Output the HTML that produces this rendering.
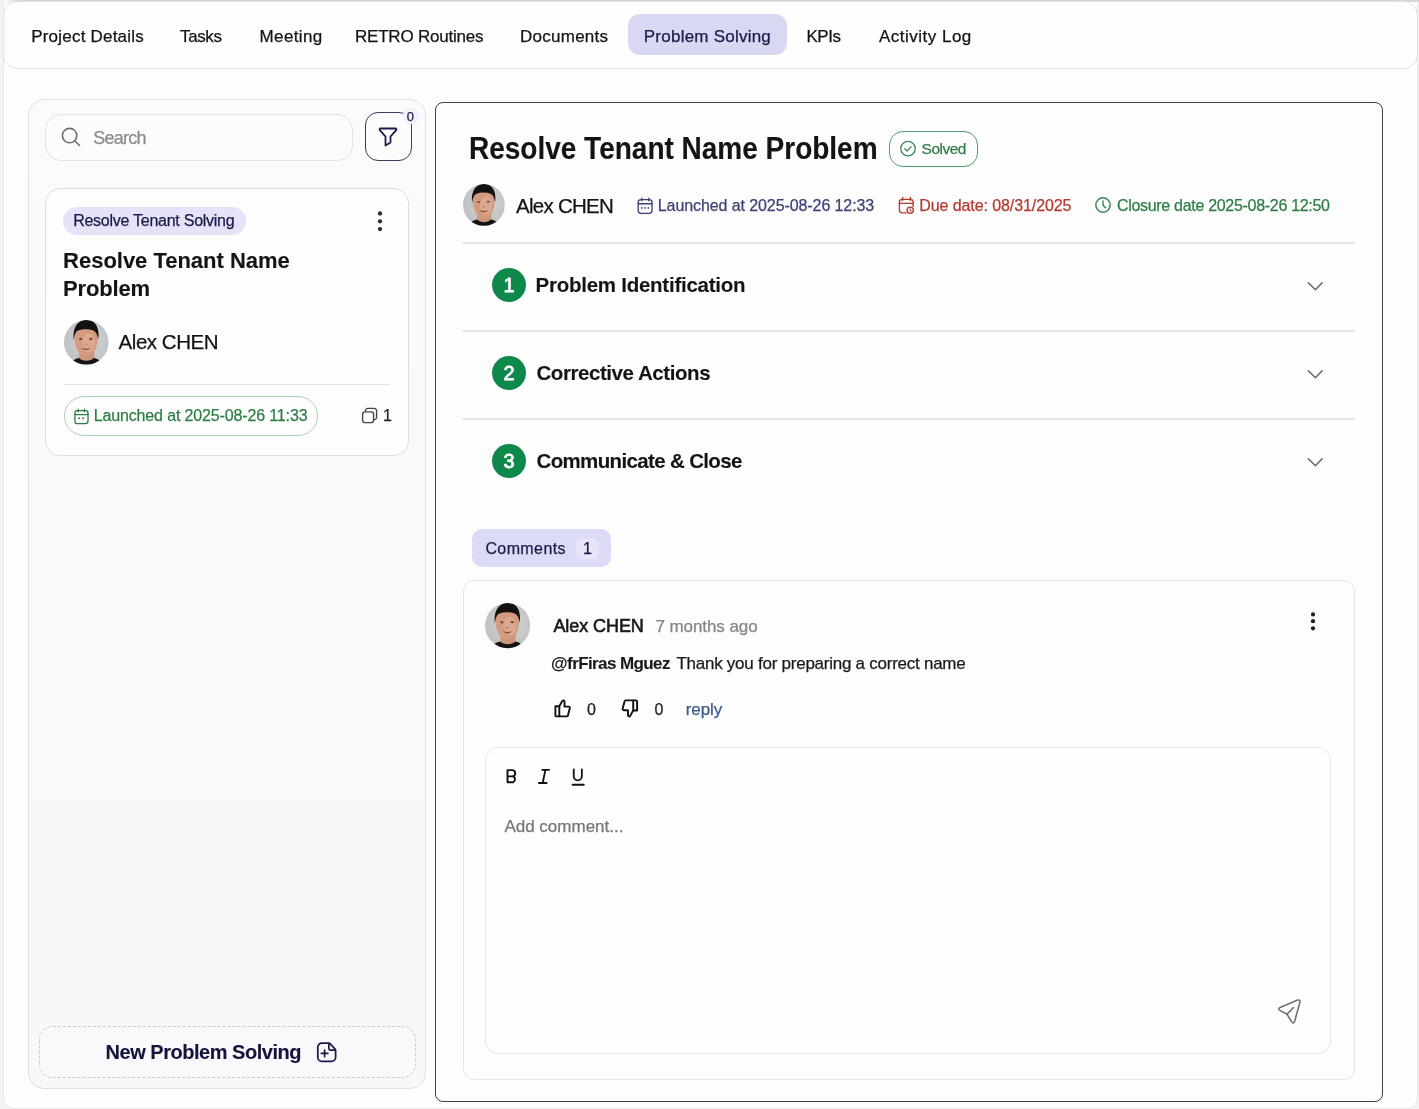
<!DOCTYPE html>
<html><head><meta charset="utf-8">
<style>
*{box-sizing:border-box;margin:0;padding:0}
html,body{width:1419px;height:1109px;overflow:hidden}
body{position:relative;background:#f2f3f5;filter:blur(0.5px);font-family:"Liberation Sans",sans-serif;color:#141414}
.a{position:absolute}
.t{position:absolute;line-height:1;white-space:nowrap;-webkit-text-stroke:0.25px currentColor}
.t[style*="font-weight:700"]{-webkit-text-stroke:0.1px currentColor}
.bx{position:absolute;box-sizing:border-box}
svg{position:absolute;overflow:visible}
</style></head><body>
<svg width="0" height="0" style="position:absolute;left:0;top:0"><defs>
<radialGradient id="avbg" cx="0.55" cy="0.45" r="0.6"><stop offset="0" stop-color="#d2d3d5"/><stop offset="1" stop-color="#bcbdbf"/></radialGradient>
<clipPath id="avclip"><circle cx="25.9" cy="26.5" r="22.3"/></clipPath>
<symbol id="avatar" viewBox="3.6 4.2 44.6 44.6">
<g clip-path="url(#avclip)">
<rect x="0" y="0" width="52" height="52" fill="url(#avbg)"/>
<path d="M18.8 34 H33.8 V47 H18.8 Z" fill="#cc967b"/>
<path d="M9.5 52 C10.5 45.5 13.5 43.2 18.8 42.2 C21.5 45.8 30.5 45.8 33.4 42.2 C38.5 43.2 41.5 45.5 42.5 52 Z" fill="#141414"/>
<path d="M14.2 20.5 C14 30.5 17.5 39.8 25.8 40.8 C34.2 39.8 37.6 30.5 37.4 20.5 C37.1 14.5 33 12 25.8 12 C18.6 12 14.5 14.5 14.2 20.5 Z" fill="#d39a7e"/>
<ellipse cx="28.3" cy="27" rx="6.5" ry="9.5" fill="#e2b39a" opacity="0.55"/>
<path d="M13.3 24.5 C11.8 12.5 17 4 26 4.2 C35.2 4.4 39.3 11.5 37.9 23.5 C37.2 19.5 35.8 16 33.2 14.6 C28.2 12.8 22.2 13 17.6 14.8 C15.1 16 14 19.5 13.3 24.5 Z" fill="#121212"/>
<ellipse cx="20.3" cy="23.3" rx="1.7" ry="1.05" fill="#5b3a2c" opacity="0.85"/>
<ellipse cx="30.5" cy="23.1" rx="1.7" ry="1.05" fill="#5b3a2c" opacity="0.85"/>
<ellipse cx="25.6" cy="28.6" rx="1.6" ry="0.9" fill="#b07a62" opacity="0.6"/>
<path d="M21 32.2 Q25.8 36.4 30.7 32.2 Q25.8 33.8 21 32.2 Z" fill="#7e3f35"/>
</g></symbol></defs></svg>
<!-- top band -->
<!-- outer container -->
<div class="bx" style="left:3px;top:-12px;width:1414.8px;height:1120.5px;border:1px solid #e6e8eb;border-radius:11px;background:#fdfdfe"></div>
<!-- tab bar -->
<div class="bx" style="left:4px;top:0;width:1415px;height:1.7px;background:linear-gradient(90deg,rgba(211,215,220,0) 0px,#d3d7dc 14px)"></div>
<div class="bx" style="left:3px;top:1px;width:1415px;height:68px;border:1px solid #dfe2e8;border-radius:14px;background:#fefefe"></div>
<div class="bx" style="left:628px;top:14px;width:159px;height:41px;border-radius:12px;background:#d8d8f3"></div>
<div class="t" id="tab1" style="left:31.2px;top:27.7px;font-size:17px;letter-spacing:0.21px">Project Details</div>
<div class="t" id="tab2" style="left:180.1px;top:27.7px;font-size:17px;letter-spacing:-0.41px">Tasks</div>
<div class="t" id="tab3" style="left:259.6px;top:27.7px;font-size:17px;letter-spacing:0.37px">Meeting</div>
<div class="t" id="tab4" style="left:355.0px;top:27.7px;font-size:17px;letter-spacing:-0.22px">RETRO Routines</div>
<div class="t" id="tab5" style="left:519.9px;top:27.7px;font-size:17px;letter-spacing:0.28px">Documents</div>
<div class="t" id="tab6" style="left:643.8px;top:27.7px;font-size:17px;color:#1c1a4a;letter-spacing:0.23px">Problem Solving</div>
<div class="t" id="tab7" style="left:806.5px;top:27.7px;font-size:17px;letter-spacing:-0.50px">KPIs</div>
<div class="t" id="tab8" style="left:879.0px;top:27.7px;font-size:17px;letter-spacing:0.49px">Activity Log</div>

<!-- LEFT PANEL -->
<div class="bx" style="left:28px;top:99px;width:398px;height:990px;border:1.3px solid #dfe0e5;border-radius:16px;background:linear-gradient(180deg,#fbfbfc 0%,#f9f9fb 40%,#f7f8fa 100%)"></div>
<!-- search -->
<div class="bx" style="left:45px;top:113.5px;width:308px;height:47px;border:1.5px solid #e2e3e7;border-radius:16px;background:#fcfcfd"></div>
<svg style="left:60px;top:126px" width="22" height="22" viewBox="0 0 22 22"><circle cx="9.6" cy="9.6" r="7.2" fill="none" stroke="#6e6e6e" stroke-width="1.6"/><path d="M14.8 14.8 L19.5 19.5" stroke="#6e6e6e" stroke-width="1.6" stroke-linecap="round"/></svg>
<div class="t" id="search" style="left:93.2px;top:128.6px;font-size:18px;color:#8b8b8b;letter-spacing:-0.72px">Search</div>
<!-- filter -->
<div class="bx" style="left:364.5px;top:112px;width:47px;height:49px;border:1.6px solid #3a3c5a;border-radius:13px;background:#fcfcfd"></div>
<svg style="left:378px;top:126px" width="20" height="21" viewBox="0 0 20 21"><path d="M2.5 2.5 H17.5 a1 1 0 0 1 .7 1.6 L12.5 10.5 V16.5 L7.5 19.5 V10.5 L1.8 4.1 a1 1 0 0 1 .7 -1.6 Z" fill="none" stroke="#1c1a4a" stroke-width="1.8" stroke-linejoin="round"/></svg>
<div class="bx" style="left:403px;top:108px;width:16px;height:16px;border-radius:8px;background:#f1f1fb"></div>
<div class="t" id="fcount" style="left:406.8px;top:109.8px;font-size:13px;font-weight:400;color:#1c1a4a">0</div>

<!-- card -->
<div class="bx" style="left:45px;top:187.5px;width:364px;height:268px;border:1.3px solid #dcdde3;border-radius:15px;background:#fdfdfe"></div>
<div class="bx" style="left:63px;top:206.5px;width:183px;height:28px;border-radius:14px;background:#e4e3f8"></div>
<div class="t" id="tag" style="left:73.2px;top:213.2px;font-size:16px;color:#1c1a4a;letter-spacing:-0.26px">Resolve Tenant Solving</div>
<svg style="left:374.3px;top:208.8px" width="12" height="26" viewBox="0 0 12 26"><circle cx="6" cy="4.5" r="2.15" fill="#2a2a35"/><circle cx="6" cy="12.3" r="2.15" fill="#2a2a35"/><circle cx="6" cy="20.05" r="2.15" fill="#2a2a35"/></svg>
<div class="t" id="ctitle1" style="left:63.1px;top:249.8px;font-size:22px;font-weight:700;letter-spacing:-0.02px">Resolve Tenant Name</div>
<div class="t" id="ctitle2" style="left:63.1px;top:277.8px;font-size:22px;font-weight:700;letter-spacing:-0.18px">Problem</div>
<svg id="av1" style="left:63.7px;top:320.1px" width="44.6" height="44.6"><use href="#avatar"/></svg>
<div class="t" id="cname" style="left:118.6px;top:332.4px;font-size:20.5px;letter-spacing:-0.46px">Alex CHEN</div>
<div class="bx" style="left:63.5px;top:384px;width:326px;height:1.3px;background:#e3e4e8"></div>
<div class="bx" style="left:63.5px;top:396px;width:254px;height:40px;border:1.3px solid #a9d2b3;border-radius:20px;background:#fdfefd"></div>
<svg id="cal1" style="left:73px;top:408px" width="16" height="17" viewBox="0 0 16 17"><rect x="1.9" y="2.7" width="13.1" height="13" rx="2.6" fill="none" stroke="#2e7d45" stroke-width="1.3"/><path d="M5.1 1.2V3.8M11.4 1.2V3.8M1.9 6.6H15" stroke="#2e7d45" stroke-width="1.3" stroke-linecap="round"/><circle cx="6.1" cy="10.2" r="0.95" fill="#2e7d45"/><circle cx="10.2" cy="10.2" r="0.95" fill="#2e7d45"/></svg>
<div class="t" id="launch1" style="left:93.7px;top:408.1px;font-size:16px;color:#2e7d45;letter-spacing:-0.14px">Launched at 2025-08-26 11:33</div>
<svg id="copy1" style="left:360px;top:407px" width="18" height="17" viewBox="0 0 18 17"><path d="M5.4 4.3V3.8a2.4 2.4 0 0 1 2.4-2.4h6.4a2.4 2.4 0 0 1 2.4 2.4v6.4a2.4 2.4 0 0 1-2.4 2.4h-0.5" fill="none" stroke="#444" stroke-width="1.35"/><rect x="2.6" y="4.9" width="11" height="10.7" rx="2.4" fill="none" stroke="#444" stroke-width="1.35"/></svg>
<div class="t" id="copyn" style="left:383.0px;top:408.0px;font-size:16px;color:#222">1</div>

<!-- new problem solving -->
<div class="bx" style="left:38.5px;top:1025.5px;width:377px;height:52.5px;border:1.3px dashed #c9cad0;border-radius:14px;background:#f9f9fc"></div>
<div class="t" id="newps" style="left:105.5px;top:1042.3px;font-size:20px;font-weight:700;color:#14133a;letter-spacing:-0.47px">New Problem Solving</div>
<svg id="newico" style="left:316px;top:1042px" width="22" height="21" viewBox="0 0 22 21"><path d="M12.8 1.1H5.9A4.1 4.1 0 0 0 1.8 5.2V15.2A4.1 4.1 0 0 0 5.9 19.3H15.5A4.1 4.1 0 0 0 19.6 15.2V8.4A2 2 0 0 0 19.1 7.2L14.3 1.8A2 2 0 0 0 12.8 1.1Z" fill="none" stroke="#1c1a4a" stroke-width="1.75" stroke-linejoin="round"/><path d="M12.9 1.5V6.5A1.5 1.5 0 0 0 14.4 8H19.3" fill="none" stroke="#1c1a4a" stroke-width="1.75" stroke-linejoin="round"/><path d="M5.3 11.4H11.8M8.6 8.2V14.7" stroke="#1c1a4a" stroke-width="1.75" stroke-linecap="round"/></svg>

<!-- RIGHT PANEL -->
<div class="bx" style="left:435px;top:101.5px;width:948px;height:1000.3px;border:1.6px solid #3f4256;border-radius:8px;background:#fdfdfe"></div>
<div class="t" id="title" style="left:469.0px;top:133.2px;font-size:30.5px;font-weight:700;transform:scaleX(0.92);transform-origin:0 0;letter-spacing:-0.04px">Resolve Tenant Name Problem</div>
<div class="bx" style="left:888.5px;top:130.5px;width:89px;height:36px;border:1.4px solid #519c68;border-radius:14px;background:#fdfefd"></div>
<svg style="left:899px;top:140px" width="18" height="18" viewBox="0 0 18 18"><circle cx="9" cy="8.6" r="7.2" fill="none" stroke="#3f8a56" stroke-width="1.3"/><path d="M5.8 8.8 L8 11 L12.2 6.6" fill="none" stroke="#3f8a56" stroke-width="1.3" stroke-linecap="round" stroke-linejoin="round"/></svg>
<div class="t" id="solved" style="left:921.6px;top:140.7px;font-size:15.5px;color:#2e7d45;letter-spacing:-0.52px">Solved</div>

<svg id="av2" style="left:462.8px;top:184.2px" width="41.8" height="41.8"><use href="#avatar"/></svg>
<div class="t" id="rname" style="left:516.0px;top:195.6px;font-size:20.5px;letter-spacing:-0.73px">Alex CHEN</div>
<svg id="cal2" style="left:636px;top:196px" width="18" height="19" viewBox="0 0 18 19"><rect x="2.2" y="3.6" width="13.8" height="13.8" rx="2.8" fill="none" stroke="#3d4275" stroke-width="1.35"/><path d="M5.9 2.2V4.8M12.8 2.2V4.8M2.2 7.7H16" stroke="#3d4275" stroke-width="1.35" stroke-linecap="round"/><circle cx="5.9" cy="11.9" r="0.85" fill="#3d4275"/><circle cx="9.1" cy="11.9" r="0.85" fill="#3d4275"/><circle cx="12.3" cy="11.9" r="0.85" fill="#3d4275"/></svg>
<div class="t" id="launch2" style="left:657.8px;top:197.9px;font-size:16px;color:#3d4275;letter-spacing:-0.09px">Launched at 2025-08-26 12:33</div>
<svg id="cal3" style="left:897px;top:195px" width="19" height="20" viewBox="0 0 19 20"><path d="M9.2 17.8H5.1a2.7 2.7 0 0 1-2.7-2.7V7a2.7 2.7 0 0 1 2.7-2.7h8.3A2.7 2.7 0 0 1 16.1 7V11.6" fill="none" stroke="#b23b30" stroke-width="1.35" stroke-linecap="round"/><path d="M5.6 2.4V5.2M13.4 2.4V5.2M2.4 8.4H16.1" stroke="#b23b30" stroke-width="1.35" stroke-linecap="round"/><circle cx="13.2" cy="15.2" r="3.1" fill="none" stroke="#b23b30" stroke-width="1.35"/><path d="M13.2 13.8V15.3L14.2 16.1" fill="none" stroke="#b23b30" stroke-width="1.1" stroke-linecap="round"/></svg>
<div class="t" id="due" style="left:919.3px;top:197.9px;font-size:16px;color:#b23b30;letter-spacing:-0.09px">Due date: 08/31/2025</div>
<svg style="left:1094px;top:196px" width="18" height="18" viewBox="0 0 18 18"><circle cx="9" cy="9" r="7.2" fill="none" stroke="#3a8a54" stroke-width="1.5"/><path d="M9 5 V9.3 L11.6 11.6" fill="none" stroke="#3a8a54" stroke-width="1.5" stroke-linecap="round" stroke-linejoin="round"/></svg>
<div class="t" id="closure" style="left:1116.9px;top:197.9px;font-size:16px;color:#2e7d45;letter-spacing:-0.30px">Closure date 2025-08-26 12:50</div>

<div class="bx" style="left:463px;top:242px;width:891.5px;height:1.5px;background:#e3e5ea"></div>
<div class="bx" style="left:463px;top:330px;width:891.5px;height:1.5px;background:#e3e5ea"></div>
<div class="bx" style="left:463px;top:418px;width:891.5px;height:1.5px;background:#e3e5ea"></div>

<div class="bx" style="left:491.85px;top:267.95px;width:34.5px;height:34.5px;border-radius:50%;background:#0f884b"></div>
<div class="t" id="n1" style="left:491.85px;top:275.3px;width:34.5px;text-align:center;font-size:20px;font-weight:400;-webkit-text-stroke:0.8px #fff;color:#fff">1</div>
<div class="t" id="acc1" style="left:535.5px;top:275.0px;font-size:20.5px;font-weight:700;letter-spacing:-0.25px">Problem Identification</div>
<div class="bx" style="left:491.85px;top:355.95px;width:34.5px;height:34.5px;border-radius:50%;background:#0f884b"></div>
<div class="t" id="n2" style="left:491.85px;top:363.3px;width:34.5px;text-align:center;font-size:20px;font-weight:400;-webkit-text-stroke:0.8px #fff;color:#fff">2</div>
<div class="t" id="acc2" style="left:536.5px;top:363.0px;font-size:20.5px;font-weight:700;letter-spacing:-0.44px">Corrective Actions</div>
<div class="bx" style="left:491.85px;top:443.95px;width:34.5px;height:34.5px;border-radius:50%;background:#0f884b"></div>
<div class="t" id="n3" style="left:491.85px;top:451.3px;width:34.5px;text-align:center;font-size:20px;font-weight:400;-webkit-text-stroke:0.8px #fff;color:#fff">3</div>
<div class="t" id="acc3" style="left:536.5px;top:451.0px;font-size:20.5px;font-weight:700;letter-spacing:-0.65px">Communicate &amp; Close</div>

<svg style="left:1300px;top:276px" width="30" height="20" viewBox="0 0 30 20"><path d="M8.3 6.8 L15.4 13.8 L22.1 6.8" fill="none" stroke="#646973" stroke-width="1.6" stroke-linecap="round" stroke-linejoin="round"/></svg>
<svg style="left:1300px;top:364px" width="30" height="20" viewBox="0 0 30 20"><path d="M8.3 6.8 L15.4 13.8 L22.1 6.8" fill="none" stroke="#646973" stroke-width="1.6" stroke-linecap="round" stroke-linejoin="round"/></svg>
<svg style="left:1300px;top:452px" width="30" height="20" viewBox="0 0 30 20"><path d="M8.3 6.8 L15.4 13.8 L22.1 6.8" fill="none" stroke="#646973" stroke-width="1.6" stroke-linecap="round" stroke-linejoin="round"/></svg>

<!-- comments tab -->
<div class="bx" style="left:472px;top:528.5px;width:139px;height:38.5px;border-radius:10px;background:#dcdbf5"></div>
<div class="t" id="comments" style="left:485.4px;top:540.7px;font-size:16px;color:#1c1a4a;letter-spacing:0.40px">Comments</div>
<div class="bx" style="left:576px;top:537.5px;width:22.5px;height:21.5px;border-radius:6px;background:#e6e5f8"></div>
<div class="t" id="ccount" style="left:583.0px;top:540.7px;font-size:16px;color:#1c1a4a">1</div>

<!-- comment card -->
<div class="bx" style="left:462.5px;top:580px;width:892px;height:499.5px;border:1.5px solid #e6e7eb;border-radius:11px;background:#fdfdfe"></div>
<svg id="av3" style="left:485.1px;top:603.1px" width="45.2" height="45.2"><use href="#avatar"/></svg>
<div class="t" id="cmname" style="left:553.4px;top:617.3px;font-size:18px;font-weight:400;color:#1a1a1a;-webkit-text-stroke:0.6px #1a1a1a;letter-spacing:-0.07px">Alex CHEN</div>
<div class="t" id="ago" style="left:655.4px;top:618.3px;font-size:17px;color:#858585;letter-spacing:-0.07px">7 months ago</div>
<svg style="left:1306.4px;top:608px" width="14" height="26" viewBox="0 0 14 26"><circle cx="7" cy="6.4" r="2.1" fill="#1e1e2c"/><circle cx="7" cy="13.2" r="2.1" fill="#1e1e2c"/><circle cx="7" cy="20.3" r="2.1" fill="#1e1e2c"/></svg>
<div class="t" id="mention" style="left:551.1px;top:654.7px;font-size:17px;font-weight:700;color:#1a1a1a;letter-spacing:-0.60px">@frFiras Mguez</div>
<div class="t" id="ctext" style="left:676.4px;top:654.7px;font-size:17px;color:#1a1a1a;letter-spacing:-0.25px">Thank you for preparing a correct name</div>
<svg id="like" style="left:553px;top:698px" width="20" height="21" viewBox="0 0 20 21"><path d="M2.4 8.3H6.3V18.4H3.4A1 1 0 0 1 2.4 17.4Z" fill="none" stroke="#111" stroke-width="1.9" stroke-linejoin="round"/><path d="M6.3 8.3L9.3 2.9A1.2 1.2 0 0 1 11.5 3.4V8.6H15.8A1.2 1.2 0 0 1 16.9 10L14.9 17.6A1.2 1.2 0 0 1 13.8 18.4H6.3" fill="none" stroke="#111" stroke-width="1.9" stroke-linejoin="round"/></svg>
<div class="t" id="l0" style="left:587.0px;top:701.7px;font-size:16px;color:#222">0</div>
<svg id="dislike" style="left:620px;top:698px" width="20" height="21" viewBox="0 0 20 21"><g transform="rotate(180 9.75 10.4)"><path d="M2.4 8.3H6.3V18.4H3.4A1 1 0 0 1 2.4 17.4Z" fill="none" stroke="#111" stroke-width="1.9" stroke-linejoin="round"/><path d="M6.3 8.3L9.3 2.9A1.2 1.2 0 0 1 11.5 3.4V8.6H15.8A1.2 1.2 0 0 1 16.9 10L14.9 17.6A1.2 1.2 0 0 1 13.8 18.4H6.3" fill="none" stroke="#111" stroke-width="1.9" stroke-linejoin="round"/></g></svg>
<div class="t" id="d0" style="left:654.4px;top:701.7px;font-size:16px;color:#222">0</div>
<div class="t" id="reply" style="left:685.7px;top:700.7px;font-size:17px;color:#3b5a8c;letter-spacing:-0.05px">reply</div>

<!-- editor -->
<div class="bx" style="left:485px;top:746.5px;width:845.5px;height:307px;border:1.5px solid #e6e7eb;border-radius:13px;background:#fefefe"></div>
<svg id="ibold" style="left:503px;top:767px" width="18" height="20" viewBox="0 0 18 20"><path d="M4.5 3.1H9.6A3.2 3.2 0 0 1 9.6 9.4H4.5ZM4.5 9.4H10.3A3.4 3.4 0 0 1 10.3 15.3H4.5Z" fill="none" stroke="#111" stroke-width="1.9" stroke-linejoin="round"/></svg>
<svg id="iital" style="left:536px;top:767px" width="18" height="20" viewBox="0 0 18 20"><path d="M6.2 2.8H13.1M2.9 16H10.7M9.4 2.8L6.7 16" fill="none" stroke="#111" stroke-width="1.8" stroke-linecap="round"/></svg>
<svg id="iund" style="left:569px;top:766px" width="18" height="22" viewBox="0 0 18 22"><path d="M4.75 3.3V10.35A4.05 4.05 0 0 0 12.85 10.35V3.3" fill="none" stroke="#111" stroke-width="1.8" stroke-linecap="round"/><path d="M3.6 18.7H14.8" stroke="#111" stroke-width="1.9" stroke-linecap="round"/></svg>
<div class="t" id="addc" style="left:504.4px;top:818.0px;font-size:17px;color:#767676;letter-spacing:0.00px">Add comment...</div>
<svg id="send" style="left:1275px;top:995px" width="30" height="32" viewBox="0 0 30 32"><path d="M12 19.3L18.5 12.5" fill="none" stroke="#707075" stroke-width="1.6" stroke-linecap="round"/><path d="M12 19.3L4.9 15.4Q2.6 13.9 5.1 12.4L22 5.3Q25.3 4.1 24.9 7.4L19.7 26.1Q18.5 29.7 16.7 26.7Z" fill="none" stroke="#707075" stroke-width="1.6" stroke-linejoin="round"/></svg>
</body></html>
